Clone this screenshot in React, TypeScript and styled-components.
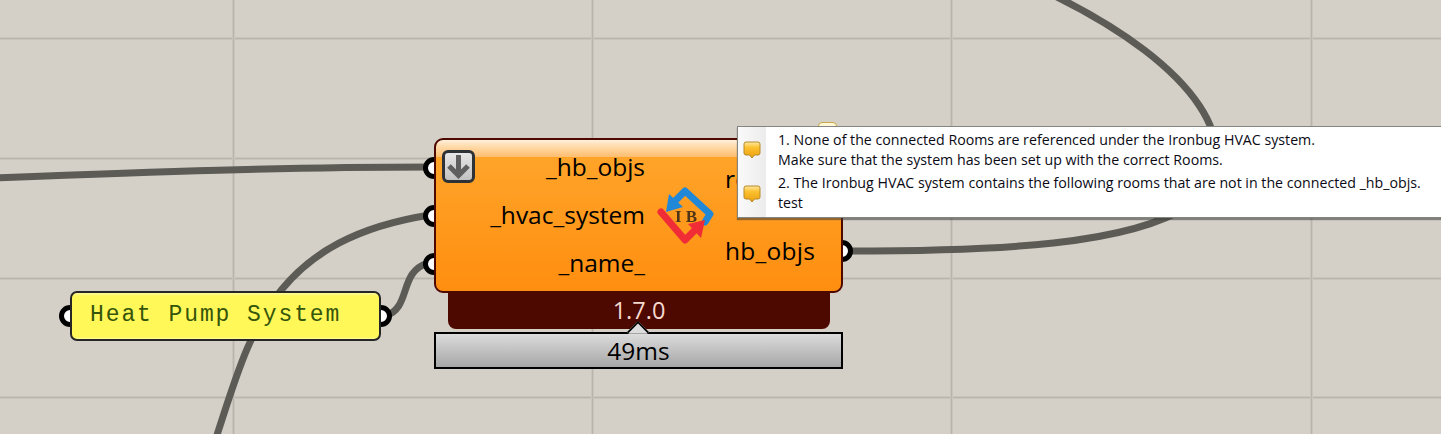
import styled, { createGlobalStyle } from 'styled-components'

const FONT = `"Open Sans", "Noto Sans", sans-serif`
const GRID_STOPS = `#c9c5bd 0 1px, #b9b5ac 1px 2px, #c9c5bd 2px 3px`
const GRID_V = `linear-gradient(to right, ${GRID_STOPS})`
const GRID_H = `linear-gradient(to bottom, ${GRID_STOPS})`

const GlobalStyle = createGlobalStyle`
  html, body {
    margin: 0;
    padding: 0;
    background: #d4d0c8;
  }
`

const Canvas = styled.div`
  position: relative;
  width: 1441px;
  height: 434px;
  overflow: hidden;
  background-color: #d4d0c8;
  background-image: ${GRID_V}, ${GRID_V}, ${GRID_V}, ${GRID_V}, ${GRID_H}, ${GRID_H}, ${GRID_H}, ${GRID_H};
  background-repeat: no-repeat;
  background-size: 3px 100%, 3px 100%, 3px 100%, 3px 100%, 100% 3px, 100% 3px, 100% 3px, 100% 3px;
  background-position: 232px 0, 591px 0, 950px 0, 1310px 0, 0 37px, 0 157px, 0 277px, 0 396px;
  font-family: ${FONT};
`

const WireLayer = styled.svg`
  position: absolute;
  inset: 0;
`

const Port = styled.span<{ $x: number; $y: number }>`
  position: absolute;
  left: ${({ $x }) => $x - 11}px;
  top: ${({ $y }) => $y - 11}px;
  width: 22px;
  height: 22px;
  box-sizing: border-box;
  border: 5px solid #000;
  border-radius: 50%;
  background: #fff;
  z-index: -1;
`

const Component = styled.div`
  position: absolute;
  left: 434px;
  top: 138px;
  width: 409px;
  isolation: isolate;
`

const Body = styled.div`
  position: relative;
  box-sizing: border-box;
  height: 155px;
  border: 2px solid #4d0800;
  border-radius: 9px;
  background:
    linear-gradient(to bottom, #fff0de 0, #ffdcae 6px, #ffbd6e 17px, rgba(255, 255, 255, 0) 17px),
    linear-gradient(to bottom, #ffa72c, #ff8e10);
  display: grid;
  grid-template-columns: 209px 80px 1fr;
  color: #000;
  font-size: 24.5px;
`

const ArrowButton = styled.div`
  position: absolute;
  left: 6px;
  top: 10px;
  width: 33px;
  height: 33px;
  box-sizing: border-box;
  border: 3px solid #2e3236;
  border-radius: 6px;
  background: linear-gradient(to bottom, #e6e6e6, #c2c2c2);
  display: flex;
  align-items: center;
  justify-content: center;
`

const InputColumn = styled.div`
  display: flex;
  flex-direction: column;
  align-items: flex-end;
  padding-top: 10px;
  gap: 15px;
`

const OutputColumn = styled.div`
  display: flex;
  flex-direction: column;
  align-items: flex-start;
  padding-top: 22px;
  gap: 39px;
  letter-spacing: 0.25px;
`

const Label = styled.div`
  height: 33px;
  line-height: 33px;
  white-space: nowrap;
`

const IconSlot = styled.div`
  display: flex;
  align-items: center;
  justify-content: center;
`

const VersionBar = styled.div`
  margin: 0 13px 0 14px;
  height: 36px;
  border-radius: 0 0 8px 8px;
  background: #4d0800;
  color: #f6d9cf;
  font-size: 23.5px;
  line-height: 34px;
  text-align: center;
`

const ProfileBar = styled.div`
  position: relative;
  box-sizing: border-box;
  height: 37px;
  margin-top: 3px;
  border: 2px solid #000;
  background: linear-gradient(to bottom, #dcdcdc, #a6a6a6);
  color: #000;
  font-size: 24.5px;
  line-height: 33px;
  text-align: center;

  &::before {
    content: '';
    position: absolute;
    left: 194px;
    top: -10px;
    width: 16px;
    height: 16px;
    box-sizing: border-box;
    background: #dcdcdc;
    border-left: 2px solid #000;
    border-top: 2px solid #000;
    transform: rotate(45deg);
    clip-path: polygon(0 0, 100% 0, 100% 15%, 15% 100%, 0 100%);
  }
`

const PanelWrap = styled.div`
  position: absolute;
  left: 70px;
  top: 291px;
  isolation: isolate;
`

const Panel = styled.div`
  box-sizing: border-box;
  width: 311px;
  height: 50px;
  padding: 9px 0 0 18px;
  border: 2px solid #262626;
  border-radius: 7px;
  background: linear-gradient(to bottom, #fff9a0 0, #fff858 3px, #fff858 44px, #fffb9a 100%);
  color: #35550a;
  font-family: "Liberation Mono", monospace;
  font-size: 23px;
  line-height: 26px;
  letter-spacing: 1.9px;
  white-space: nowrap;
`

const BalloonTop = styled.div`
  position: absolute;
  left: 818px;
  top: 122px;
  width: 19px;
  height: 10px;
  box-sizing: border-box;
  border: 1px solid #c9a84a;
  border-radius: 4px 4px 0 0;
  background: #fff8d8;
`

const Tooltip = styled.div`
  position: absolute;
  left: 737px;
  top: 126px;
  width: 720px;
  height: 92px;
  box-sizing: border-box;
  border: 1px solid #85857f;
  background: #fff;
  box-shadow: 0 2px 1px rgba(60, 60, 60, 0.55);
  display: grid;
  grid-template-columns: 28px 1fr;
`

const TooltipGutter = styled.div`
  display: flex;
  flex-direction: column;
  align-items: center;
  padding-top: 14px;
  gap: 26px;
  background: linear-gradient(to right, #fafafa, #ececec);
`

const TooltipBody = styled.div`
  display: flex;
  flex-direction: column;
  gap: 3px;
  padding: 3px 0 0 12px;
  color: #0a0a14;
  font-size: 14.2px;
  line-height: 20px;
`

const Message = styled.div`
  white-space: nowrap;
`

function Balloon() {
  return (
    <svg width="18" height="18" viewBox="0 0 18 18">
      <defs>
        <linearGradient id="balloonFill" x1="0" y1="0" x2="0" y2="1">
          <stop offset="0" stopColor="#ffe9a0" />
          <stop offset="0.35" stopColor="#fcc02e" />
          <stop offset="1" stopColor="#eaa010" />
        </linearGradient>
      </defs>
      <path
        d="M3 1h12a2 2 0 0 1 2 2v9a2 2 0 0 1-2 2h-3.5L9 17l-2.5-3H3a2 2 0 0 1-2-2V3a2 2 0 0 1 2-2z"
        fill="url(#balloonFill)"
        stroke="#b78a2c"
        strokeWidth="1"
      />
    </svg>
  )
}

function IronbugIcon() {
  return (
    <svg width="70" height="70" viewBox="0 0 70 70" style={{ filter: 'blur(0.5px)' }}>
      <path d="M26 19L35 10L60 33L55 41" fill="none" stroke="#2188d8" strokeWidth="7" strokeLinecap="round" strokeLinejoin="round" />
      <path d="M16 31L19 13L33 26z" fill="#2188d8" />
      <path d="M11 31L35 59L46 48" fill="none" stroke="#f02c36" strokeWidth="7" strokeLinecap="round" strokeLinejoin="round" />
      <path d="M55 39L38 43L51 57z" fill="#f02c36" />
      <text x="38" y="41" textAnchor="middle" fontFamily='"Liberation Serif", serif' fontWeight="700" fontSize="17" letterSpacing="4" fill="#4f3518">
        IB
      </text>
    </svg>
  )
}

function DownArrow() {
  return (
    <svg width="25" height="25" viewBox="0 0 25 25">
      <path d="M12.5 1v20M3 12l9.5 9.5L22 12" fill="none" stroke="#5f5f5f" strokeWidth="5" />
    </svg>
  )
}

export default function App() {
  return (
    <Canvas>
      <GlobalStyle />
      <WireLayer width="1441" height="434" viewBox="0 0 1441 434">
        <g fill="none" stroke="#5c5b55" strokeWidth="7">
          <path d="M-4 178C150 172 290 167 430 167" />
          <path d="M216 438C250 335 270 240 430 215" />
          <path d="M385 316C412 308 398 272 428 263" />
          <path d="M848 251C1000 251 1130 245 1190 205C1255 150 1195 65 1055 -4" />
        </g>
      </WireLayer>

      <PanelWrap>
        <Port $x={0} $y={25} />
        <Port $x={311} $y={25} />
        <Panel>Heat Pump System</Panel>
      </PanelWrap>

      <Component>
        <Port $x={0} $y={30} />
        <Port $x={0} $y={78} />
        <Port $x={0} $y={126} />
        <Port $x={408} $y={113} />
        <Body>
          <ArrowButton>
            <DownArrow />
          </ArrowButton>
          <InputColumn>
            <Label>_hb_objs</Label>
            <Label>_hvac_system</Label>
            <Label>_name_</Label>
          </InputColumn>
          <IconSlot>
            <IronbugIcon />
          </IconSlot>
          <OutputColumn>
            <Label>rooms</Label>
            <Label>hb_objs</Label>
          </OutputColumn>
        </Body>
        <VersionBar>1.7.0</VersionBar>
        <ProfileBar>49ms</ProfileBar>
      </Component>

      <BalloonTop />
      <Tooltip>
        <TooltipGutter>
          <Balloon />
          <Balloon />
        </TooltipGutter>
        <TooltipBody>
          <Message>
            1. None of the connected Rooms are referenced under the Ironbug HVAC system.
            <br />
            Make sure that the system has been set up with the correct Rooms.
          </Message>
          <Message>
            2. The Ironbug HVAC system contains the following rooms that are not in the connected _hb_objs.
            <br />
            test
          </Message>
        </TooltipBody>
      </Tooltip>
    </Canvas>
  )
}
